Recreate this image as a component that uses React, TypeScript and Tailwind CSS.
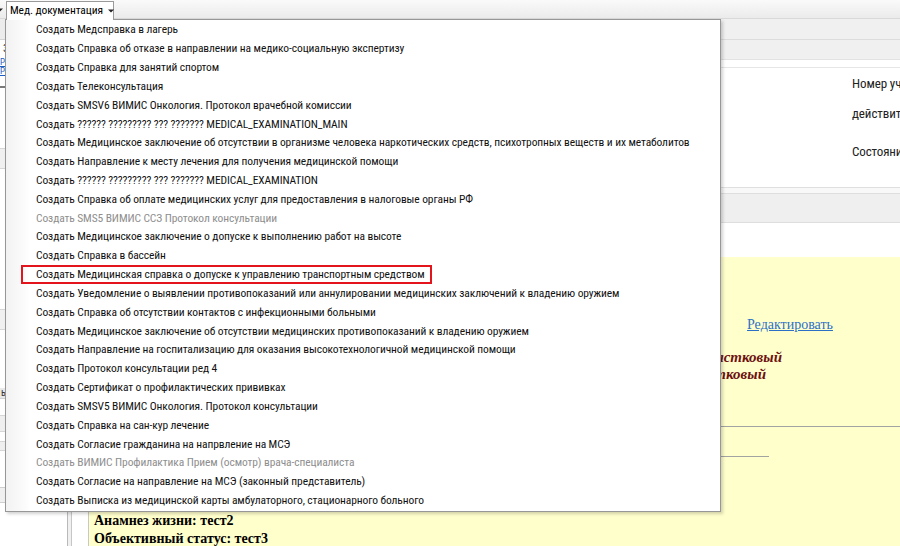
import React from "react";

type Item = { t: string; off?: boolean; mark?: boolean };

const items: Item[] = [
  { t: "Создать Медсправка в лагерь" },
  { t: "Создать Справка об отказе в направлении на медико-социальную экспертизу" },
  { t: "Создать Справка для занятий спортом" },
  { t: "Создать Телеконсультация" },
  { t: "Создать SMSV6 ВИМИС Онкология. Протокол врачебной комиссии" },
  { t: "Создать ?????? ????????? ??? ??????? MEDICAL_EXAMINATION_MAIN" },
  {
    t: "Создать Медицинское заключение об отсутствии в организме человека наркотических средств, психотропных веществ и их метаболитов",
  },
  { t: "Создать Направление к месту лечения для получения медицинской помощи" },
  { t: "Создать ?????? ????????? ??? ??????? MEDICAL_EXAMINATION" },
  { t: "Создать Справка об оплате медицинских услуг для предоставления в налоговые органы РФ" },
  { t: "Создать SMS5 ВИМИС ССЗ Протокол консультации", off: true },
  { t: "Создать Медицинское заключение о допуске к выполнению работ на высоте" },
  { t: "Создать Справка в бассейн" },
  { t: "Создать Медицинская справка о допуске к управлению транспортным средством", mark: true },
  {
    t: "Создать Уведомление о выявлении противопоказаний или аннулировании медицинских заключений к владению оружием",
  },
  { t: "Создать Справка об отсутствии контактов с инфекционными больными" },
  { t: "Создать Медицинское заключение об отсутствии медицинских противопоказаний к владению оружием" },
  { t: "Создать Направление на госпитализацию для оказания высокотехнологичной медицинской помощи" },
  { t: "Создать Протокол консультации ред 4" },
  { t: "Создать Сертификат о профилактических прививках" },
  { t: "Создать SMSV5 ВИМИС Онкология. Протокол консультации" },
  { t: "Создать Справка на сан-кур лечение" },
  { t: "Создать Согласие гражданина на напрвление на МСЭ" },
  { t: "Создать ВИМИС Профилактика Прием (осмотр) врача-специалиста", off: true },
  { t: "Создать Согласие на направление на МСЭ (законный представитель)" },
  { t: "Создать Выписка из медицинской карты амбулаторного, стационарного больного" },
];

const Caret = () => (
  <svg width="6" height="4" viewBox="0 0 6 4" className="shrink-0">
    <path d="M0 0.5h6L3 3.5z" fill="#222" />
  </svg>
);

const SideRows = () => (
  <div className="flex w-[68px] shrink-0 flex-col border-r border-[#b9b9b9] bg-white">
    <div className="h-[21px] border-b border-[#d4d4d4] bg-[#ececec]" />
    <div className="h-[17px] pl-[3px] leading-[17px] text-[#333]">32</div>
    <div className="h-[31px] border-b-2 border-[#7a7a7a] pt-[1px] text-[9px] leading-[9px] text-[#1b5fc4] underline">
      <div>Ред</div>
      <div>Ред</div>
    </div>
    <div className="h-[60px] bg-white" />
    <div className="h-[21px] border-y border-[#d6d6d6] bg-[#f0f0f0]" />
    <div className="h-[140px] bg-white" />
    <div className="h-[21px] border-y border-[#d6d6d6] bg-[#f0f0f0]" />
    <div className="h-[58px] bg-white" />
    <div className="h-[10px] bg-[#e9e9e9] pl-[1px] text-[10px] leading-[10px] text-[#333]">ь</div>
    <div className="h-[17px] border-t border-[#d0d0d0] bg-white" />
    <div className="h-[17px] border-y border-[#d6d6d6] bg-[#efefef]" />
    <div className="h-[9px] bg-white" />
    <div className="h-[10px] border-y border-[#d6d6d6] bg-[#efefef]" />
    <div className="h-[36px] bg-white" />
    <div className="h-[16px] border-y border-[#cfcfcf] bg-[#f0f0f0]" />
    <div className="flex-1 bg-white" />
  </div>
);

export default function App() {
  return (
    <div className="relative flex h-[546px] w-[900px] flex-col overflow-hidden bg-white font-['Roboto_Condensed','Liberation_Sans',sans-serif] text-[11.5px] tracking-[-0.1px] text-black">
      {/* tab strip */}
      <div className="flex h-[19px] shrink-0 items-start border-b border-[#d9d9d9] bg-gradient-to-b from-[#fafafa] to-[#ebebeb]">
        <div className="flex h-[19px] w-[6px] items-center overflow-hidden">
          <div className="-ml-[3px]">
            <Caret />
          </div>
        </div>
        <div className="relative z-20 mt-px flex h-[19px] w-[108px] items-center gap-[5px] border border-b-0 border-[#9a9a9a] bg-white pl-[3px]">
          <span className="whitespace-nowrap">Мед. документация</span>
          <Caret />
        </div>
      </div>

      {/* page body behind the menu */}
      <div className="flex flex-1">
        <SideRows />
        <div className="w-[4px] shrink-0 border-r border-[#c6c6c6] bg-[#f0f0f0]" />
        <div className="flex flex-1 flex-col">
          <div className="h-[21px] border-b border-[#dcdcdc] bg-[#f0f0f0]" />
          <div className="h-[20px] border-b border-[#e2e2e2] bg-[#f0f0f0]" />
          <div className="h-[8px] border-b border-[#e6e6e6] bg-white" />
          <div className="flex h-[120px] border-b border-[#e0e0e0] bg-white">
            <div className="w-[780px] shrink-0" />
            <div className="flex flex-col whitespace-nowrap pt-[8px] text-[13px] leading-[16px] text-[#222]">
              <div>Номер участка:</div>
              <div className="mt-[14px]">действительно с:</div>
              <div className="mt-[22px]">Состояние:</div>
            </div>
          </div>
          <div className="h-[5px] bg-[#f8f8f8]" />
          <div className="h-[30px] border-y border-[#dedede] bg-[#efefef]" />
          <div className="h-[34px] bg-white" />
          <div className="flex flex-1">
            <div className="w-[17px] shrink-0 border-r border-[#c8c8c8] bg-white" />
            <div className="flex flex-1 flex-col bg-[#ffffcc] pl-[5px] font-['Liberation_Serif','Times_New_Roman',serif] tracking-normal">
              <div className="mt-[58px] h-[20px] pl-[653px] text-[14px] leading-[20px]">
                <span className="text-[#2b6fc7] underline">Редактировать</span>
              </div>
              <div className="mt-[14px] h-[17px] w-[688px] whitespace-nowrap text-right text-[15px] font-bold italic leading-[17px] text-[#6e1212]">
                Врач-терапевт участковый
              </div>
              <div className="h-[17px] w-[672px] whitespace-nowrap text-right text-[15px] font-bold italic leading-[17px] text-[#6e1212]">
                Терапевтический участковый
              </div>
              <div className="ml-[120px] mt-[43px] border-t border-[#a3a3a3]" />
              <div className="ml-[500px] mt-[29px] w-[175px] border-t border-[#a3a3a3]" />
              <div className="mt-[55px] h-[18px] whitespace-nowrap text-[14px] font-bold leading-[18px]">
                Анамнез жизни: тест2
              </div>
              <div className="h-[18px] whitespace-nowrap text-[14px] font-bold leading-[18px]">
                Объективный статус: тест3
              </div>
            </div>
          </div>
        </div>
      </div>

      {/* dropdown menu */}
      <div className="absolute left-[5px] top-[19px] z-10 h-[493px] w-[716px] border border-[#979797] bg-[linear-gradient(to_right,#f2f2f2_0,#fbfbfb_18px,#ffffff_24px)] pt-[0.6px] shadow-[2px_2px_3px_rgba(0,0,0,0.18)]">
        {items.map((it, i) => (
          <div key={i} className={`flex h-[18.84px] items-center whitespace-nowrap ${it.mark ? "pl-[15px]" : "pl-[30px]"}`}>
            {it.mark ? (
              <div className="flex h-full w-[411px] items-center border-2 border-[#e3141c] pl-[13px] text-[#111]">{it.t}</div>
            ) : (
              <span className={it.off ? "text-[#8e8e8e]" : "text-[#111]"}>{it.t}</span>
            )}
          </div>
        ))}
      </div>
    </div>
  );
}
